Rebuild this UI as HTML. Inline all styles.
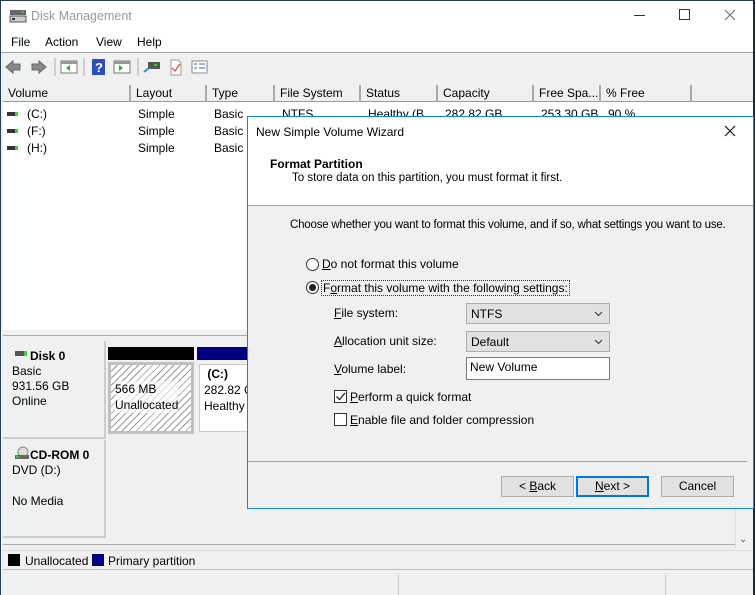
<!DOCTYPE html>
<html><head><style>
*{margin:0;padding:0;box-sizing:border-box}
body{width:755px;height:595px;position:relative;overflow:hidden;background:#1c2a3a;font-family:"Liberation Sans",sans-serif;font-size:12px;color:#000}
.a{position:absolute;white-space:nowrap}
.u{text-decoration:underline}
</style></head><body>
<div class="a" style="left:0;top:0;width:753px;height:595px;background:#f0f0f0;border-left:1px solid #2b3d55;border-top:1px solid #2b3d55"></div>
<!-- title -->
<div class="a" style="left:1px;top:1px;width:752px;height:31px;background:#fff"></div>
<svg class="a" style="left:9px;top:8px" width="18" height="16"><rect x="1" y="2" width="16" height="5" fill="#666"/><rect x="12" y="3" width="3" height="2" fill="#3c3"/><rect x="1" y="8" width="16" height="6" fill="#ccc" stroke="#555"/><rect x="3" y="10" width="3" height="2" fill="#333"/></svg>
<div class="a" style="left:31px;top:9px;font-size:12.5px;color:#999">Disk Management</div>
<div class="a" style="left:634px;top:15px;width:11px;height:1px;background:#333"></div>
<div class="a" style="left:679px;top:9px;width:11px;height:11px;border:1px solid #333"></div>
<svg class="a" style="left:724px;top:9px" width="12" height="12"><path d="M1 1 L11 11 M11 1 L1 11" stroke="#666" stroke-width="1"/></svg>
<!-- menu -->
<div class="a" style="left:1px;top:32px;width:752px;height:21px;background:#fff;border-bottom:1px solid #a0a0a0"></div>
<div class="a" style="left:11px;top:35px">File</div>
<div class="a" style="left:45px;top:35px">Action</div>
<div class="a" style="left:96px;top:35px">View</div>
<div class="a" style="left:137px;top:35px">Help</div>
<!-- toolbar -->
<svg class="a" style="left:4px;top:57px" width="220" height="20">
<path d="M2 10 L9 4 V7 H16 V13 H9 V16 Z" fill="#888" stroke="#666"/>
<path d="M42 10 L35 4 V7 H28 V13 H35 V16 Z" fill="#888" stroke="#666"/>
<line x1="51" y1="1" x2="51" y2="19" stroke="#aaa"/>
<rect x="57" y="4" width="16" height="12" fill="#fff" stroke="#777"/><rect x="57" y="4" width="16" height="3" fill="#999"/><path d="M66 8 L62 11 L66 14Z" fill="#3a3"/>
<line x1="80" y1="1" x2="80" y2="19" stroke="#aaa"/>
<rect x="88" y="2" width="13" height="16" fill="#2b4fc0"/><text x="91" y="15" fill="#fff" font-size="13" font-weight="bold" font-family="Liberation Sans">?</text>
<rect x="110" y="4" width="16" height="12" fill="#fff" stroke="#777"/><rect x="110" y="4" width="16" height="3" fill="#999"/><path d="M115 8 L119 11 L115 14Z" fill="#3a3"/>
<line x1="134" y1="1" x2="134" y2="19" stroke="#aaa"/>
<rect x="144" y="5" width="12" height="7" fill="#555"/><rect x="150" y="7" width="3" height="2" fill="#3c3"/><line x1="140" y1="15" x2="145" y2="11" stroke="#38c" stroke-width="2"/>
<path d="M167 3 H174 L177 6 V18 H167 Z" fill="#fff" stroke="#999"/><path d="M168 11 L171 14 L176 7" stroke="#e55" fill="none" stroke-width="1.5"/>
<rect x="188" y="4" width="15" height="12" fill="#fff" stroke="#888"/><path d="M190 7 h3 M190 11 h3 M195 7 h6 M195 11 h6" stroke="#36c"/>
</svg>
<!-- list -->
<div class="a" style="left:3px;top:84px;width:750px;height:246px;background:#fff"></div>
<div class="a" style="left:3px;top:84px;width:750px;height:18px;border-bottom:1px solid #999;background:#f0f0f0"></div>
<div class="a" style="left:3px;top:85px;height:17px;display:flex;font-size:12px;line-height:17px">
<div style="width:128px;padding-left:5px;border-right:2px solid #aaa">Volume</div>
<div style="width:76px;padding-left:5px;border-right:2px solid #aaa">Layout</div>
<div style="width:68px;padding-left:5px;border-right:2px solid #aaa">Type</div>
<div style="width:86px;padding-left:5px;border-right:2px solid #aaa">File System</div>
<div style="width:77px;padding-left:5px;border-right:2px solid #aaa">Status</div>
<div style="width:96px;padding-left:5px;border-right:2px solid #aaa">Capacity</div>
<div style="width:67px;padding-left:5px;border-right:2px solid #aaa">Free Spa...</div>
<div style="width:91px;padding-left:5px;border-right:2px solid #aaa">% Free</div>
</div>
<div class="a" style="left:7px;top:112px;width:11px;height:4px;background:#333;border-right:3px solid #4c4"></div>
<div class="a" style="left:7px;top:129px;width:11px;height:4px;background:#333;border-right:3px solid #4c4"></div>
<div class="a" style="left:7px;top:146px;width:11px;height:4px;background:#333;border-right:3px solid #4c4"></div>
<div class="a" style="left:27px;top:106px;line-height:17px">(C:)<br>(F:)<br>(H:)</div>
<div class="a" style="left:138px;top:106px;line-height:17px">Simple<br>Simple<br>Simple</div>
<div class="a" style="left:214px;top:106px;line-height:17px">Basic<br>Basic<br>Basic</div>
<div class="a" style="left:282px;top:106px;line-height:17px">NTFS</div>
<div class="a" style="left:368px;top:106px;line-height:17px">Healthy (B...</div>
<div class="a" style="left:445px;top:106px;line-height:17px">282.82 GB</div>
<div class="a" style="left:541px;top:106px;line-height:17px">253.30 GB</div>
<div class="a" style="left:608px;top:106px;line-height:17px">90 %</div>
<!-- lower -->
<div class="a" style="left:3px;top:335px;width:750px;height:1px;background:#aaa"></div>
<div class="a" style="left:3px;top:341px;width:732px;height:204px;background:#f0f0f0;border-bottom:1px solid #aaa"></div>
<div class="a" style="left:735px;top:336px;width:17px;height:212px;background:#f0f0f0;border-left:1px solid #ddd"></div>
<div class="a" style="left:739px;top:534px;font-size:10px;color:#666">⌄</div>
<div class="a" style="left:3px;top:341px;width:103px;height:98px;border-right:2px solid #ccc;border-bottom:2px solid #ccc"></div>
<div class="a" style="left:3px;top:440px;width:103px;height:98px;border-right:2px solid #ccc;border-bottom:2px solid #ccc"></div>
<div class="a" style="left:15px;top:351px;width:12px;height:5px;background:#555;border-right:3px solid #4c4"></div>
<div class="a" style="left:30px;top:349px;font-weight:bold">Disk 0</div>
<div class="a" style="left:12px;top:364px;line-height:15px">Basic<br>931.56 GB<br>Online</div>
<svg class="a" style="left:14px;top:446px" width="16" height="14"><circle cx="9" cy="6" r="5" fill="#ddd" stroke="#888"/><rect x="1" y="9" width="14" height="4" fill="#666"/><rect x="2" y="10" width="3" height="2" fill="#3c3"/></svg>
<div class="a" style="left:30px;top:448px;font-weight:bold">CD-ROM 0</div>
<div class="a" style="left:12px;top:463px">DVD (D:)</div>
<div class="a" style="left:12px;top:494px">No Media</div>
<div class="a" style="left:108px;top:347px;width:86px;height:13px;background:#000"></div>
<div class="a" style="left:197px;top:347px;width:60px;height:13px;background:#000080"></div>
<div class="a" style="left:108px;top:362px;width:86px;height:72px;background:#c0c0c0;padding:3px"><div style="width:100%;height:100%;background:repeating-linear-gradient(135deg,#fff 0 4px,#999 4px 5px)"></div></div>
<div class="a" style="left:115px;top:381px;line-height:16px;background:rgba(255,255,255,.6)">566 MB<br>Unallocated</div>
<div class="a" style="left:197px;top:362px;width:60px;height:72px;background:#fff;border:3px solid #f0f0f0;outline:1px solid #ccc;outline-offset:-3px"></div>
<div class="a" style="left:204px;top:366px;line-height:16px"><b>&nbsp;(C:)</b><br>282.82 G<br>Healthy</div>
<!-- legend -->
<div class="a" style="left:3px;top:550px;width:750px;height:20px;border-bottom:1px solid #bbb;border-top:1px solid #ddd"></div>
<div class="a" style="left:8px;top:554px;width:12px;height:12px;background:#000"></div>
<div class="a" style="left:25px;top:554px">Unallocated</div>
<div class="a" style="left:92px;top:554px;width:12px;height:12px;background:#000080"></div>
<div class="a" style="left:108px;top:554px">Primary partition</div>
<div class="a" style="left:398px;top:574px;width:1px;height:21px;background:#ccc"></div>
<div class="a" style="left:665px;top:574px;width:1px;height:21px;background:#ccc"></div>
<div class="a" style="left:753px;top:0;width:2px;height:595px;background:#1c2a3a"></div>
<!-- dialog -->
<div class="a" style="left:247px;top:116px;width:507px;height:393px;background:#f0f0f0;border:1px solid #1883d7"></div>
<div class="a" style="left:248px;top:117px;width:505px;height:89px;background:#fff;border-bottom:1px solid #a0a0a0"></div>
<div class="a" style="left:256px;top:125px">New Simple Volume Wizard</div>
<svg class="a" style="left:724px;top:125px" width="12" height="12"><path d="M1 1 L11 11 M11 1 L1 11" stroke="#111" stroke-width="1.1"/></svg>
<div class="a" style="left:270px;top:157px;font-weight:bold">Format Partition</div>
<div class="a" style="left:292px;top:172px;font-size:11.5px">To store data on this partition, you must format it first.</div>
<div class="a" style="left:290px;top:219px;font-size:11.5px;letter-spacing:-0.2px">Choose whether you want to format this volume, and if so, what settings you want to use.</div>
<div class="a" style="left:306px;top:258px;width:13px;height:13px;border:1px solid #333;border-radius:50%;background:#fff"></div>
<div class="a" style="left:322px;top:257px"><span class="u">D</span>o not format this volume</div>
<div class="a" style="left:306px;top:281px;width:13px;height:13px;border:1px solid #333;border-radius:50%;background:#fff"><div style="margin:2px;width:7px;height:7px;border-radius:50%;background:#222"></div></div>
<div class="a" style="left:321px;top:280px;border:1px dotted #333;padding:0 1px">F<span class="u">o</span>rmat this volume with the following settings:</div>
<div class="a" style="left:334px;top:306px"><span class="u">F</span>ile system:</div>
<div class="a" style="left:334px;top:334px"><span class="u">A</span>llocation unit size:</div>
<div class="a" style="left:334px;top:362px"><span class="u">V</span>olume label:</div>
<div class="a" style="left:466px;top:303px;width:144px;height:21px;background:#e1e1e1;border:1px solid #adadad;padding:3px 4px">NTFS<svg style="position:absolute;right:6px;top:7px" width="9" height="6"><path d="M1 1 L4.5 4.5 L8 1" stroke="#333" fill="none"/></svg></div>
<div class="a" style="left:466px;top:331px;width:144px;height:21px;background:#e1e1e1;border:1px solid #adadad;padding:3px 4px">Default<svg style="position:absolute;right:6px;top:7px" width="9" height="6"><path d="M1 1 L4.5 4.5 L8 1" stroke="#333" fill="none"/></svg></div>
<div class="a" style="left:466px;top:357px;width:144px;height:23px;background:#fff;border:1px solid #7a7a7a;padding:2px 3px">New Volume</div>
<div class="a" style="left:334px;top:390px;width:13px;height:13px;border:1px solid #333;background:#fff"><svg width="11" height="11" style="display:block"><path d="M1.5 5.5 L4.5 8.5 L10 2" stroke="#222" fill="none" stroke-width="1.3"/></svg></div>
<div class="a" style="left:350px;top:390px"><span class="u">P</span>erform a quick format</div>
<div class="a" style="left:334px;top:413px;width:13px;height:13px;border:1px solid #333;background:#fff"></div>
<div class="a" style="left:350px;top:413px"><span class="u">E</span>nable file and folder compression</div>
<div class="a" style="left:248px;top:461px;width:499px;height:1px;background:#a0a0a0"></div>
<div class="a" style="left:501px;top:476px;width:73px;height:21px;background:#e1e1e1;border:1px solid #adadad;text-align:center;line-height:19px">&lt; <span class="u">B</span>ack</div>
<div class="a" style="left:576px;top:476px;width:73px;height:21px;background:#e1e1e1;border:2px solid #0078d7;text-align:center;line-height:17px"><span class="u">N</span>ext &gt;</div>
<div class="a" style="left:661px;top:476px;width:73px;height:21px;background:#e1e1e1;border:1px solid #adadad;text-align:center;line-height:19px">Cancel</div>
</body></html>
